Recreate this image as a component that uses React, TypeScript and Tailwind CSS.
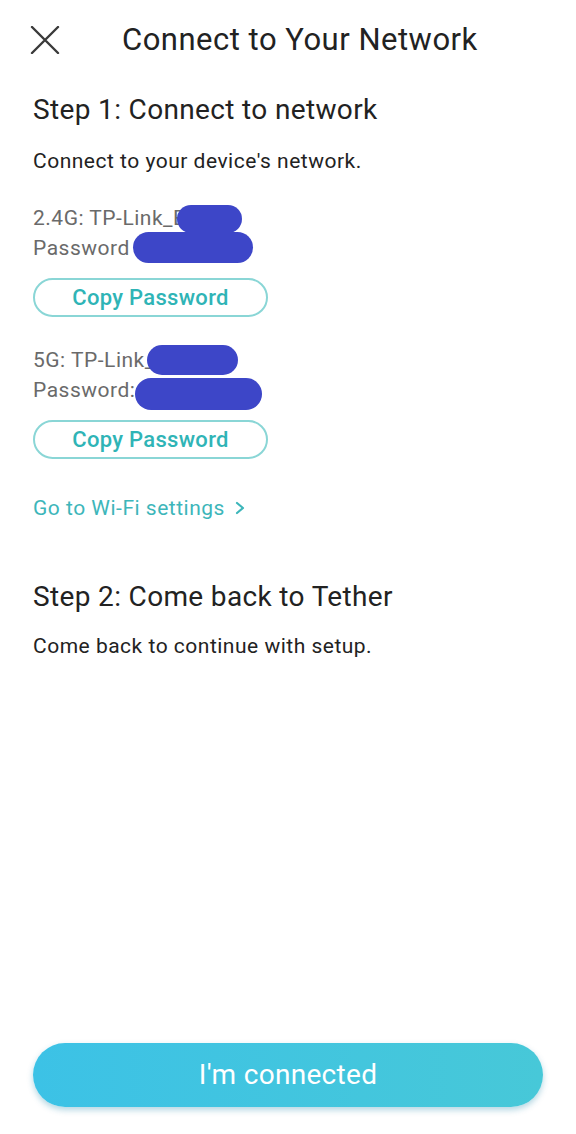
import React from "react";

const Blob = ({ className }: { className: string }) => (
  <span className={`absolute rounded-full bg-[#3d46c8] ${className}`} />
);

export default function App() {
  return (
    <div className="w-[576px] h-[1134px] bg-white flex flex-col font-['Roboto',sans-serif] text-[#222]">
      <div className="h-[80px] flex items-center pl-[30px]">
        <svg width="30" height="28" viewBox="0 0 30 28" className="shrink-0">
          <path d="M2 1 L28 27 M28 1 L2 27" stroke="#3a3a3a" strokeWidth="2.4" strokeLinecap="round" fill="none" />
        </svg>
        <h1 className="ml-[62px] text-[31px] leading-[36px] tracking-[0.5px] font-normal text-[#222]">Connect to Your Network</h1>
      </div>

      <div className="px-[33px] flex flex-col">
        <h2 className="mt-[12px] text-[28px] leading-[36px] tracking-[0.35px] text-[#222]">Step 1: Connect to network</h2>
        <p className="mt-[19px] text-[21px] leading-[28px] tracking-[0.5px] text-[#222]">Connect to your device's network.</p>

        <div className="relative mt-[28px] text-[21px] leading-[30px] tracking-[0.5px] text-[#6a6a6a]">
          <div>2.4G: TP-Link_E</div>
          <div>Password</div>
          <Blob className="left-[144px] top-[2px] w-[65px] h-[28px]" />
          <Blob className="left-[100px] top-[29px] w-[120px] h-[31px]" />
        </div>
        <button className="mt-[15px] w-[235px] h-[39px] rounded-full border-2 border-[#8ad6d6] text-[#2fb4b6] text-[22px] tracking-[0.3px] font-medium flex items-center justify-center">
          Copy Password
        </button>

        <div className="relative mt-[28px] text-[21px] leading-[30px] tracking-[0.5px] text-[#6a6a6a]">
          <div>5G: TP-Link_</div>
          <div>Password:</div>
          <Blob className="left-[114px] top-[0px] w-[91px] h-[30px]" />
          <Blob className="left-[102px] top-[33px] w-[127px] h-[32px]" />
        </div>
        <button className="mt-[15px] w-[235px] h-[39px] rounded-full border-2 border-[#8ad6d6] text-[#2fb4b6] text-[22px] tracking-[0.3px] font-medium flex items-center justify-center">
          Copy Password
        </button>

        <div className="mt-[35px] flex items-center text-[21px] leading-[28px] tracking-[0.5px] text-[#3db6ba]">
          <span>Go to Wi-Fi settings</span>
          <svg width="12" height="14" viewBox="0 0 12 14" className="ml-[9px]">
            <path d="M3 2 L9 7 L3 12" stroke="#3db6ba" strokeWidth="2.2" fill="none" strokeLinecap="round" strokeLinejoin="round" />
          </svg>
        </div>

        <h2 className="mt-[57px] text-[28px] leading-[36px] tracking-[0.35px] text-[#222]">Step 2: Come back to Tether</h2>
        <p className="mt-[17px] text-[21px] leading-[28px] tracking-[0.5px] text-[#222]">Come back to continue with setup.</p>
      </div>

      <div className="flex-1" />
      <div className="px-[33px] pb-[27px]">
        <button className="w-full h-[64px] rounded-full bg-gradient-to-r from-[#3cc2e6] to-[#47c8d8] text-white text-[28px] tracking-[0.3px] shadow-[0_3px_6px_rgba(0,120,160,0.3)] flex items-center justify-center">
          I'm connected
        </button>
      </div>
    </div>
  );
}
